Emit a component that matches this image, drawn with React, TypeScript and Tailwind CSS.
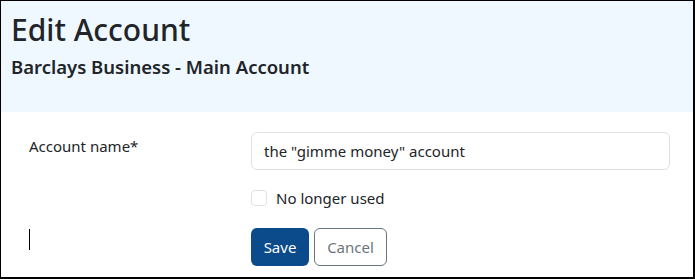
import React from "react";

const font = { fontFamily: '"Noto Sans", "Open Sans", sans-serif' };

export default function App() {
  return (
    <div
      className="w-[695px] h-[279px] bg-white border-l border-t border-r-2 border-b-2 border-black text-[#212529] overflow-hidden"
      style={font}
    >
      <div className="bg-[#f0f8ff] h-[111px] pl-[10px] pt-[11px]">
        <h1 className="text-[30px] leading-[36px] font-medium">Edit Account</h1>
        <h2 className="text-[18.5px] leading-[24px] font-semibold mt-[7px]">
          Barclays Business - Main Account
        </h2>
      </div>
      <div className="grid grid-cols-[222px_1fr] pl-[28px] pr-[23px] pt-[20px]">
        <label className="text-[15px] leading-[24px] pt-[2px]">Account name*</label>
        <input
          className="h-[38px] border border-[#dee2e6] rounded-[6px] px-[12px] text-[15px] leading-[24px] text-[#212529] outline-none"
          defaultValue={'the "gimme money" account'}
          style={font}
        />
        <div />
        <div className="flex items-center gap-[9px] mt-[16px] h-[24px]">
          <span className="w-[16px] h-[16px] border border-[#dee2e6] rounded-[4px] bg-white" />
          <span className="text-[15px] leading-[24px]">No longer used</span>
        </div>
        <div className="pt-[1px]">
          <div className="mt-[18px] w-px h-[21px] bg-black" />
        </div>
        <div className="flex gap-[5px] mt-[18px]">
          <button className="h-[38px] w-[58px] rounded-[6px] bg-[#0b4a8b] text-white text-[15px] leading-[24px]">
            Save
          </button>
          <button className="h-[38px] w-[73px] rounded-[6px] border border-[#6c757d] text-[#6c757d] text-[15px] leading-[24px] bg-white">
            Cancel
          </button>
        </div>
      </div>
    </div>
  );
}
